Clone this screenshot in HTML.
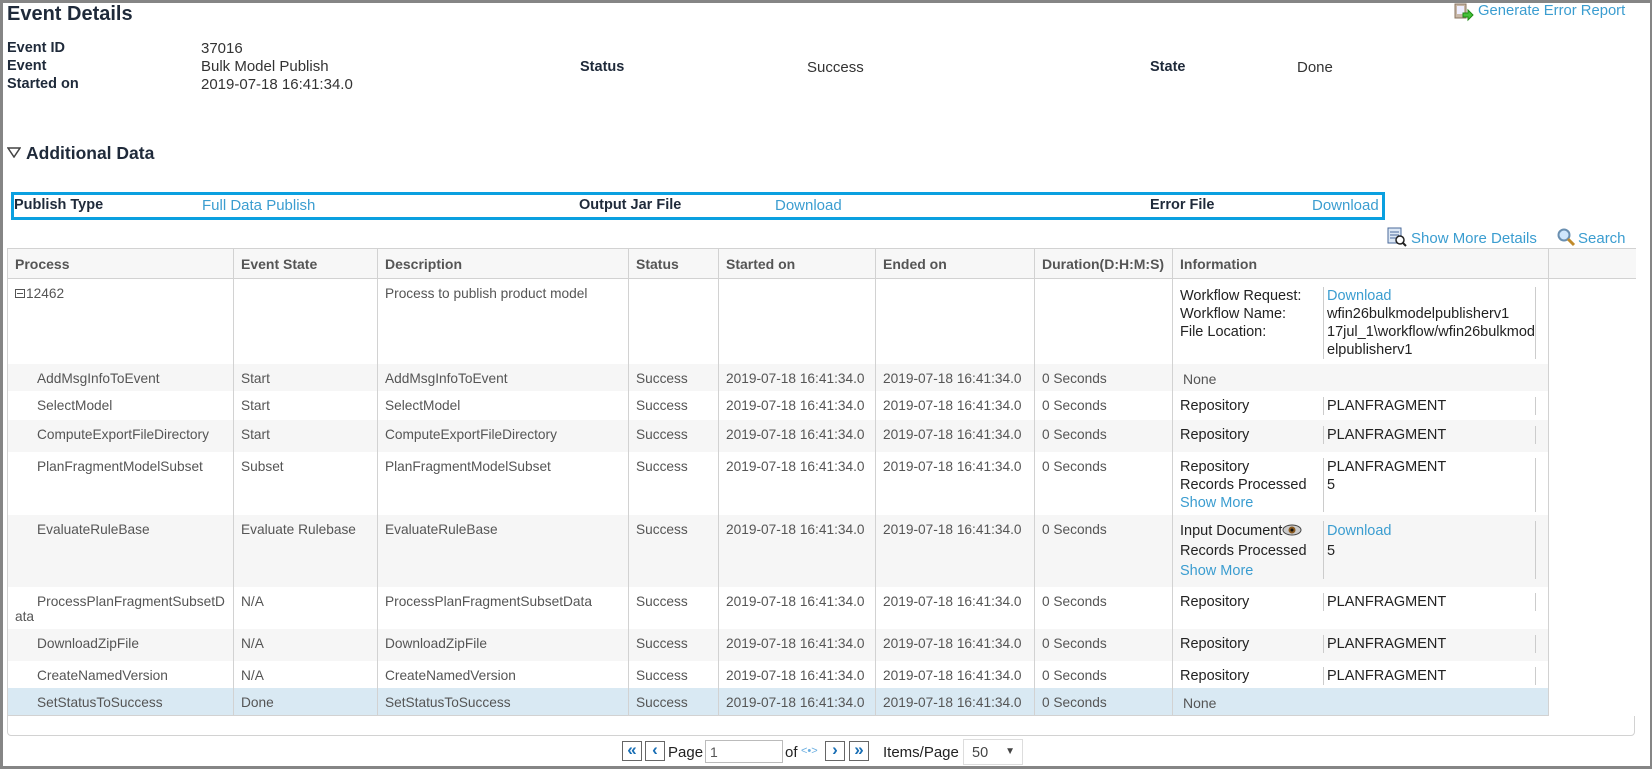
<!DOCTYPE html>
<html><head><meta charset="utf-8"><style>
*{box-sizing:border-box;margin:0;padding:0}
html,body{width:1652px;height:769px;overflow:hidden;background:#fff;font-family:"Liberation Sans",Arial,sans-serif}
.frame{position:absolute;left:0;top:0;width:1652px;height:769px;border:3px solid #858585;border-right-width:2px;border-bottom-width:3px}
.a{position:absolute;white-space:nowrap}
.lb{font-weight:bold;font-size:14.5px;color:#1f2a3a}
.v{font-size:15px;color:#333}
.lnk{color:#3b9dd0}
table.t{position:absolute;left:7px;top:248px;border-collapse:collapse;table-layout:fixed;font-size:13.7px;color:#555}
table.t td,table.t th{border-left:1px solid #d2d2d2;border-right:1px solid #d2d2d2;vertical-align:top;padding:7px 7px 0 7px;text-align:left;overflow:hidden}
table.t th{background:#f7f7f7;font-weight:bold;font-size:14px;color:#555;height:30px;vertical-align:middle;padding-top:0;border-top:1px solid #d2d2d2;border-bottom:1px solid #d2d2d2}
table.t td.e{border:none;background:#fff !important}
tr.g td{background:#f6f6f6}
tr.s td{background:#d9e9f3}
td.p{padding-left:29px !important;white-space:normal;word-break:break-all}
.info{font-size:14.5px;color:#222;line-height:18px}
.info .l{display:inline-block;width:143px;vertical-align:top}
.info .r{display:inline-block;width:213px;border-left:1px solid #ccc;border-right:1px solid #ccc;padding-left:3px;vertical-align:top;word-break:break-all;white-space:normal}
.wrap{position:absolute;left:7px;top:248px;width:1628px;height:488px;border:1px solid #d2d2d2;border-radius:0 0 4px 4px}
.pb{position:absolute;top:741px;width:20px;height:20px;border:1px solid #666;background:#fff;color:#1a6fb5;font-weight:bold;font-size:17px;text-align:center;line-height:16px}
</style></head><body>
<div class="frame"></div>
<div class="a" style="left:7px;top:3px;font-size:20px;font-weight:bold;color:#1f2a3a">Event Details</div>
<svg class="a" style="left:1454px;top:3px" width="22" height="20" viewBox="0 0 22 20"><rect x="1" y="1" width="11" height="14" fill="#c8b8a8" stroke="#8a7460"/><rect x="3" y="3" width="7" height="8" fill="#eef" /><path d="M9 10h5v-3l5 5-5 5v-3H9z" fill="#45c23a" stroke="#1d8a14"/></svg>
<div class="a lnk" style="left:1478px;top:3px;font-size:14.8px">Generate Error Report</div>

<div class="a lb" style="left:7px;top:40px">Event ID</div>
<div class="a lb" style="left:7px;top:58px">Event</div>
<div class="a lb" style="left:7px;top:76px">Started on</div>
<div class="a v" style="left:201px;top:40px">37016</div>
<div class="a v" style="left:201px;top:58px">Bulk Model Publish</div>
<div class="a v" style="left:201px;top:76px">2019-07-18 16:41:34.0</div>
<div class="a lb" style="left:580px;top:59px">Status</div>
<div class="a v" style="left:807px;top:59px">Success</div>
<div class="a lb" style="left:1150px;top:59px">State</div>
<div class="a v" style="left:1297px;top:59px">Done</div>

<svg class="a" style="left:7px;top:147px" width="14" height="11" viewBox="0 0 14 11"><path d="M1 1h12L7 10z" fill="#fff" stroke="#444" stroke-width="1.5"/></svg>
<div class="a" style="left:26px;top:143px;font-size:17.5px;font-weight:bold;color:#1f2a3a">Additional Data</div>

<div class="a" style="left:11px;top:192px;width:1374px;height:28px;border:3px solid #0aa0e0"></div>
<div class="a lb" style="left:14px;top:197px">Publish Type</div>
<div class="a v lnk" style="left:202px;top:197px">Full Data Publish</div>
<div class="a lb" style="left:579px;top:197px">Output Jar File</div>
<div class="a v lnk" style="left:775px;top:197px">Download</div>
<div class="a lb" style="left:1150px;top:197px">Error File</div>
<div class="a v lnk" style="left:1312px;top:197px">Download</div>

<svg class="a" style="left:1387px;top:227px" width="20" height="20" viewBox="0 0 20 20"><rect x="1" y="1" width="13" height="15" fill="#dde8f5" stroke="#4a6a9a"/><path d="M3 5h9M3 8h9M3 11h6" stroke="#4a6a9a"/><circle cx="13" cy="13" r="4" fill="#fff" stroke="#222" stroke-width="1.5"/><path d="M16 16l3 3" stroke="#222" stroke-width="2"/></svg>
<div class="a lnk" style="left:1411px;top:230px;font-size:15px">Show More Details</div>
<svg class="a" style="left:1556px;top:227px" width="20" height="20" viewBox="0 0 20 20"><circle cx="8" cy="8" r="5.5" fill="#cfe6fb" stroke="#6a8fb0" stroke-width="2"/><path d="M12 12l6 6" stroke="#c08a2a" stroke-width="3"/></svg>
<div class="a lnk" style="left:1578px;top:230px;font-size:15px">Search</div>

<div class="wrap"></div>
<table class="t">
<colgroup><col style="width:226px"><col style="width:144px"><col style="width:251px"><col style="width:90px"><col style="width:157px"><col style="width:159px"><col style="width:138px"><col style="width:376px"><col style="width:87px"></colgroup>
<tr><th>Process</th><th>Event State</th><th>Description</th><th>Status</th><th>Started on</th><th>Ended on</th><th>Duration(D:H:M:S)</th><th>Information</th><th style="border-right:none"></th></tr>
<tr style="height:85px"><td><span style="display:inline-block;width:10px;height:9px;border:1px solid #555;margin-right:1px;background:linear-gradient(#555,#555) center/6px 1px no-repeat"></span>12462</td><td></td><td>Process to publish product model</td><td></td><td></td><td></td><td></td><td class="info" style="padding-top:8px"><span class="l">Workflow Request:<br>Workflow Name:<br>File Location:</span><span class="r"><span class="lnk">Download</span><br>wfin26bulkmodelpublisherv1<br>17jul_1\workflow/wfin26bulkmodelpublisherv1</span></td><td class="e"></td></tr>
<tr class="g" style="height:27px"><td class="p">AddMsgInfoToEvent</td><td>Start</td><td>AddMsgInfoToEvent</td><td>Success</td><td>2019-07-18 16:41:34.0</td><td>2019-07-18 16:41:34.0</td><td>0 Seconds</td><td style="padding-left:10px;font-size:14px">None</td><td class="e"></td></tr>
<tr style="height:29px"><td class="p">SelectModel</td><td>Start</td><td>SelectModel</td><td>Success</td><td>2019-07-18 16:41:34.0</td><td>2019-07-18 16:41:34.0</td><td>0 Seconds</td><td class="info" style="padding-top:6px"><span class="l">Repository</span><span class="r">PLANFRAGMENT</span></td><td class="e"></td></tr>
<tr class="g" style="height:32px"><td class="p">ComputeExportFileDirectory</td><td>Start</td><td>ComputeExportFileDirectory</td><td>Success</td><td>2019-07-18 16:41:34.0</td><td>2019-07-18 16:41:34.0</td><td>0 Seconds</td><td class="info" style="padding-top:6px"><span class="l">Repository</span><span class="r">PLANFRAGMENT</span></td><td class="e"></td></tr>
<tr style="height:63px"><td class="p">PlanFragmentModelSubset</td><td>Subset</td><td>PlanFragmentModelSubset</td><td>Success</td><td>2019-07-18 16:41:34.0</td><td>2019-07-18 16:41:34.0</td><td>0 Seconds</td><td class="info" style="padding-top:6px"><span class="l">Repository<br>Records Processed<br><span class="lnk">Show More</span></span><span class="r" style="height:54px">PLANFRAGMENT<br>5</span></td><td class="e"></td></tr>
<tr class="g" style="height:72px"><td class="p">EvaluateRuleBase</td><td>Evaluate Rulebase</td><td>EvaluateRuleBase</td><td>Success</td><td>2019-07-18 16:41:34.0</td><td>2019-07-18 16:41:34.0</td><td>0 Seconds</td><td class="info" style="padding-top:6px"><span class="l" style="line-height:20px">Input Document<svg width="20" height="12" viewBox="0 0 20 12" style="vertical-align:-1px"><ellipse cx="10" cy="6" rx="9" ry="5" fill="#ccc" stroke="#444"/><circle cx="10" cy="6" r="3.5" fill="#8a5a20"/><circle cx="10" cy="6" r="1.5" fill="#111"/></svg><br>Records Processed<br><span class="lnk">Show More</span></span><span class="r" style="height:58px;line-height:20px"><span class="lnk">Download</span><br>5</span></td><td class="e"></td></tr>
<tr style="height:42px"><td style="padding-left:7px;text-indent:22px;word-break:break-all;white-space:normal">ProcessPlanFragmentSubsetData</td><td>N/A</td><td>ProcessPlanFragmentSubsetData</td><td>Success</td><td>2019-07-18 16:41:34.0</td><td>2019-07-18 16:41:34.0</td><td>0 Seconds</td><td class="info" style="padding-top:6px"><span class="l">Repository</span><span class="r">PLANFRAGMENT</span></td><td class="e"></td></tr>
<tr class="g" style="height:32px"><td class="p">DownloadZipFile</td><td>N/A</td><td>DownloadZipFile</td><td>Success</td><td>2019-07-18 16:41:34.0</td><td>2019-07-18 16:41:34.0</td><td>0 Seconds</td><td class="info" style="padding-top:6px"><span class="l">Repository</span><span class="r">PLANFRAGMENT</span></td><td class="e"></td></tr>
<tr style="height:27px"><td class="p">CreateNamedVersion</td><td>N/A</td><td>CreateNamedVersion</td><td>Success</td><td>2019-07-18 16:41:34.0</td><td>2019-07-18 16:41:34.0</td><td>0 Seconds</td><td class="info" style="padding-top:6px"><span class="l">Repository</span><span class="r">PLANFRAGMENT</span></td><td class="e"></td></tr>
<tr class="s" style="height:28px"><td class="p" style="border-bottom:1px solid #d2d2d2">SetStatusToSuccess</td><td style="border-bottom:1px solid #d2d2d2">Done</td><td style="border-bottom:1px solid #d2d2d2">SetStatusToSuccess</td><td style="border-bottom:1px solid #d2d2d2">Success</td><td style="border-bottom:1px solid #d2d2d2">2019-07-18 16:41:34.0</td><td style="border-bottom:1px solid #d2d2d2">2019-07-18 16:41:34.0</td><td style="border-bottom:1px solid #d2d2d2">0 Seconds</td><td style="padding-left:10px;font-size:14px;border-bottom:1px solid #d2d2d2">None</td><td class="e"></td></tr>
</table>

<div class="pb" style="left:622px">«</div>
<div class="pb" style="left:645px">‹</div>
<div class="a" style="left:668px;top:744px;font-size:15px;color:#222">Page</div>
<div class="a" style="left:705px;top:740px;width:78px;height:23px;border:1px solid #bbb;font-size:14px;color:#555;padding:3px 4px">1</div>
<div class="a" style="left:785px;top:744px;font-size:15px;color:#222">of</div>
<div class="a" style="left:801px;top:745px;font-size:11px;color:#6aaee0">&lt;•&gt;</div>
<div class="pb" style="left:825px">›</div>
<div class="pb" style="left:849px">»</div>
<div class="a" style="left:883px;top:744px;font-size:15px;color:#222">Items/Page</div>
<div class="a" style="left:963px;top:739px;width:60px;height:26px;border:1px solid #ddd;font-size:14.5px;color:#444;padding:5px 8px">50<span style="position:absolute;right:7px;top:6px;font-size:10px">▼</span></div>
</body></html>
